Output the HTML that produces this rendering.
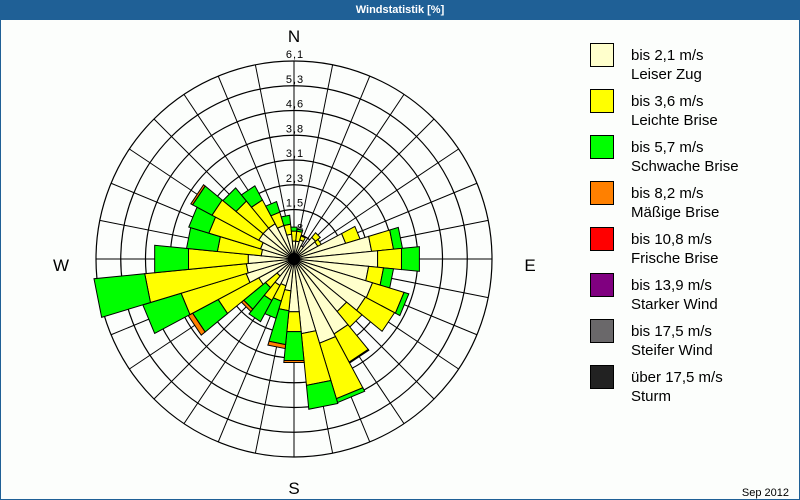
<!DOCTYPE html>
<html><head><meta charset="utf-8">
<style>
html,body{margin:0;padding:0;width:800px;height:500px;overflow:hidden;background:#fcfefc;font-family:"Liberation Sans",sans-serif}
#wrap{position:absolute;left:0;top:0;width:798px;height:499px;border:1px solid #1f6096;border-top:none;background:#fcfefc}
#title{position:absolute;left:0;top:0;width:800px;height:20px;background:#1f6096;color:#fff;font-weight:bold;font-size:11px;text-align:center;line-height:20px}
svg{position:absolute;left:0;top:0}
</style></head><body>
<div id="wrap"></div>
<div id="title">Windstatistik [%]</div>
<svg id="s" width="800" height="500" xmlns="http://www.w3.org/2000/svg" font-family="Liberation Sans, sans-serif"></svg>
<script>
var s=document.getElementById('s'),NS='http://www.w3.org/2000/svg';
function el(t,a,txt){var e=document.createElementNS(NS,t);for(var k in a)e.setAttribute(k,a[k]);if(txt!=null)e.textContent=txt;s.appendChild(e);return e;}
var cx=294,cy=259,R=24.75;
function pt(r,a){a=a*Math.PI/180;return [(cx+r*Math.sin(a)).toFixed(2),(cy-r*Math.cos(a)).toFixed(2)];}
for(var k=1;k<=8;k++)el('circle',{cx:cx,cy:cy,r:R*k,fill:'none',stroke:'#000','stroke-width':1.2});
for(var i=0;i<32;i++){var p=pt(198,i*11.25);el('line',{x1:cx,y1:cy,x2:p[0],y2:p[1],stroke:'#000','stroke-width':1});}
var labels=['0,8','1,5','2,3','3,1','3,8','4,6','5,3','6,1'];
for(var k=0;k<8;k++){el('text',{x:cx+1,y:cy-R*(k+1)-3,'font-size':11,'text-anchor':'middle','letter-spacing':'1'},labels[k]);}
var cols=['#ffffcc','#ffff00','#00ff00','#ff8000'];
var d=[[18,28,32],[18,28,30],[20,24],[15],[28,34],[27,31],[54,69],[78,100,109],[84,108,126],[75,90,100],[82,115,120],[81,114],[68,88],[85,117,118],[88,146,150],[75,127,151],[53,73,102,104],[32,52,86,90],[28,44,62],[30,47,71],[22,37,65,68],[40,86,115,120],[50,118,158],[48,150,201],[46,106,140],[33,77,108],[35,89,110],[40,93,115,117],[40,75,92],[40,67,83],[35,49,60],[25,35,44]];
for(var i=0;i<32;i++){var a=i*11.25,prev=0;for(var j=0;j<d[i].length;j++){var r=d[i][j];
var p1=pt(prev,a-5.625),p2=pt(r,a-5.625),p3=pt(r,a+5.625),p4=pt(prev,a+5.625);
el('polygon',{points:[p1,p2,p3,p4].map(function(q){return q.join(',')}).join(' '),fill:cols[j],stroke:'#000','stroke-width':1});prev=r;}}
el('circle',{cx:cx,cy:cy,r:6,fill:'#000'});
el('text',{x:cx,y:42,'font-size':17,'text-anchor':'middle'},'N');
el('text',{x:cx,y:494,'font-size':17,'text-anchor':'middle'},'S');
el('text',{x:61,y:271,'font-size':17,'text-anchor':'middle'},'W');
el('text',{x:530,y:271,'font-size':17,'text-anchor':'middle'},'E');
var leg=[['#ffffcc','bis 2,1 m/s','Leiser Zug'],['#ffff00','bis 3,6 m/s','Leichte Brise'],['#00ff00','bis 5,7 m/s','Schwache Brise'],['#ff8000','bis 8,2 m/s','Mäßige Brise'],['#ff0000','bis 10,8 m/s','Frische Brise'],['#800080','bis 13,9 m/s','Starker Wind'],['#6a686a','bis 17,5 m/s','Steifer Wind'],['#222222','über 17,5 m/s','Sturm']];
for(var i=0;i<8;i++){var y=43+i*46;
el('rect',{x:590.5,y:y+0.5,width:23,height:23,fill:leg[i][0],stroke:'#000','stroke-width':1});
el('text',{x:631,y:y+17,'font-size':15,fill:'#000'},leg[i][1]);
el('text',{x:631,y:y+36,'font-size':15,fill:'#000'},leg[i][2]);}
el('text',{x:789,y:496,'font-size':11,'text-anchor':'end'},'Sep 2012');
</script>
</body></html>
